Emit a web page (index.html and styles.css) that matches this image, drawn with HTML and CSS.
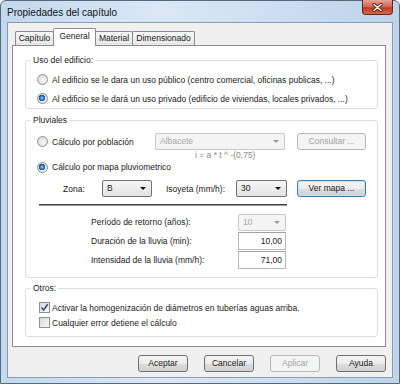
FILE: index.html
```html
<!DOCTYPE html>
<html lang="es">
<head>
  <meta charset="UTF-8" />
  <title>Propiedades del capítulo</title>
  <link rel="stylesheet" href="styles.css">
</head>
<body>
  <div class="window">
    <div class="titlebar">
      <span class="title">Propiedades del capítulo</span>
      <span class="close">
        <svg width="11" height="9" viewBox="0 0 11 9"><path d="M2 1.5 L9 7.5 M9 1.5 L2 7.5" stroke="#5a1c12" stroke-width="3.2" stroke-linecap="round"/><path d="M2 1.5 L9 7.5 M9 1.5 L2 7.5" stroke="#fff" stroke-width="1.6" stroke-linecap="round"/></svg>
      </span>
    </div>

    <div class="client">
      <div class="tabs">
        <span class="tab t-cap">Capítulo</span>
        <span class="tab active t-gen">General</span>
        <span class="tab t-mat">Material</span>
        <span class="tab t-dim">Dimensionado</span>
      </div>

      <div class="panel">
        <fieldset class="group uso">
          <legend>Uso del edificio:</legend>
          <div class="opt"><span class="radio"></span>Al edificio se le dara un uso público (centro comercial, oficinas publicas, ...)</div>
          <div class="opt"><span class="radio on"></span>Al edificio se le dará un uso privado (edificio de viviendas, locales privados, ...)</div>
        </fieldset>

        <fieldset class="group pluv">
          <legend>Pluviales</legend>
          <div class="row r-pob">
            <div class="opt w-pob"><span class="radio"></span>Cálculo por población</div>
            <span class="combo off w-alb">Albacete</span>
            <span class="btn off w-btn">Consultar ...</span>
          </div>
          <div class="formula">i = a * t ^ -(0,75)</div>
          <div class="opt r-mapa"><span class="radio on"></span>Cálculo por mapa pluviometrico</div>
          <div class="row r-zona">
            <span class="lbl w-zona">Zona:</span>
            <span class="combo w-b">B</span>
            <span class="lbl w-iso">Isoyeta (mm/h):</span>
            <span class="combo w-30">30</span>
            <span class="btn focus w-btn">Ver mapa ...</span>
          </div>
          <div class="sep"></div>
          <div class="fields">
            <div class="row field"><span class="lbl w-field">Período de retorno (años):</span><span class="combo off w-num">10</span></div>
            <div class="row field"><span class="lbl w-field">Duración de la lluvia (min):</span><span class="input w-num">10,00</span></div>
            <div class="row field"><span class="lbl w-field">Intensidad de la lluvia (mm/h):</span><span class="input w-num">71,00</span></div>
          </div>
        </fieldset>

        <fieldset class="group otros">
          <legend>Otros:</legend>
          <div class="chk-row">
            <span class="check"><svg width="9" height="9" viewBox="0 0 9 9"><path d="M1.5 4.5 L3.6 7 L7.8 1.2" fill="none" stroke="#3c4e8c" stroke-width="1.6"/></svg></span>Activar la homogenización de diámetros en tuberías aguas arriba.
          </div>
          <div class="chk-row"><span class="check"></span>Cualquier error detiene el cálculo</div>
        </fieldset>
      </div>

      <div class="buttons">
        <span class="btn">Aceptar</span>
        <span class="btn">Cancelar</span>
        <span class="btn off">Aplicar</span>
        <span class="btn">Ayuda</span>
      </div>
    </div>
  </div>
</body>
</html>
```

FILE: styles.css
```css
* {
  box-sizing: border-box;
}
body {
  margin: 0;
  font-family: "Liberation Sans", Arial, sans-serif;
  font-size: 8.5px;
  color: #1a1a1a;
}
.window {
  width: 400px;
  height: 384px;
  border: 1px solid #56687c;
  border-radius: 6px 6px 0 0;
  background: linear-gradient(to right, #c2d8ee, #dae8f6 40%, #c9dcf0 75%, #bcd3ea);
  padding: 0 6px 5px;
  display: flex;
  flex-direction: column;
}
.titlebar {
  height: 21px;
  display: flex;
  justify-content: space-between;
  align-items: flex-start;
}
.title {
  font-size: 10px;
  line-height: 12px;
  padding-top: 6px;
  color: #111;
}
.close {
  width: 31px;
  height: 15px;
  margin-top: -1px;
  border: 1px solid #6b2418;
  border-top: none;
  border-radius: 0 0 4px 4px;
  background: linear-gradient(#e7a497, #d0634f 50%, #bf3a22 55%, #d46a4a);
  display: flex;
  align-items: center;
  justify-content: center;
}
.client {
  flex: 1;
  display: flex;
  flex-direction: column;
  background: #f0f0f0;
  border: 1px solid #8a9db3;
  padding: 5px 6px 5px 4px;
}

/* tabs */
.tabs {
  display: flex;
  align-items: flex-end;
  padding-left: 3px;
}
.tab {
  height: 14px;
  line-height: 12px;
  text-align: center;
  border: 1px solid #898c95;
  border-bottom: none;
  border-radius: 2px 2px 0 0;
  background: linear-gradient(#f7f7f7, #e6e6e6);
  margin-left: -1px;
}
.tab.active {
  height: 18px;
  line-height: 15px;
  margin-bottom: -1px;
  background: #fff;
  position: relative;
  z-index: 1;
}
.t-cap { width: 39px; margin-left: 0; }
.t-gen { width: 43px; }
.t-mat { width: 38px; }
.t-dim { width: 63px; }

.panel {
  flex: 1;
  background: #fff;
  border: 1px solid #898c95;
  padding: 9px 7px 0 12px;
}

/* group boxes */
.group {
  margin: 0;
  border: 1px solid #d5dfe5;
  border-radius: 3px;
  padding: 0 0 0 11px;
}
.group legend {
  line-height: 11px;
  padding: 0 2px;
  margin-left: -6px;
}
.uso {
  padding-top: 4px;
}
.uso .opt {
  height: 19px;
}
.pluv {
  margin-top: 6px;
  padding-top: 7px;
  padding-bottom: 8px;
}
.otros {
  margin-top: 5px;
  padding-top: 6px;
  padding-bottom: 6px;
}

.opt, .chk-row {
  display: flex;
  align-items: center;
  white-space: nowrap;
}
.radio {
  width: 11px;
  height: 11px;
  border-radius: 50%;
  border: 1px solid #8f9092;
  background: radial-gradient(circle at 60% 60%, #f8f8f8, #d2d2d2);
  margin-right: 4px;
  flex: none;
}
.radio.on {
  background: radial-gradient(circle at 45% 45%, #9ed6f6 0, #2a78bf 2px, #1c4f8a 3px, transparent 3.4px),
              radial-gradient(circle at 60% 60%, #f8f8f8, #d2d2d2);
}
.chk-row {
  height: 15px;
}
.check {
  width: 11px;
  height: 11px;
  margin: 0 2px 0 2px;
  border: 1px solid #8f8f8f;
  background: linear-gradient(135deg, #d8d8d8, #f8f8f8);
  display: flex;
  align-items: center;
  justify-content: center;
  flex: none;
}

.row {
  display: flex;
  align-items: center;
}
.r-pob {
  height: 17px;
}
.w-pob { width: 118px; }
.w-alb { width: 130px; }
.w-btn { width: 69px; margin-left: 12px; }
.formula {
  line-height: 11px;
  margin-left: 158px;
  color: #8a8a8a;
}
.r-mapa {
  height: 12px;
}
.r-zona {
  height: 17px;
  margin-top: 7px;
  padding-left: 26px;
}
.w-zona { width: 39px; }
.w-b { width: 50px; }
.w-iso { width: 70px; margin-left: 14px; }
.w-30 { width: 51px; }
.r-zona .w-btn { margin-left: 10px; }
.sep {
  width: 248px;
  height: 2px;
  margin: 7px 0 0 2px;
  border-top: 1px solid #3f3f3f;
  border-bottom: 1px solid #9a9a9a;
}
.fields {
  margin-top: 7px;
  padding-left: 54px;
  display: flex;
  flex-direction: column;
  gap: 1px;
}
.field {
  height: 18px;
}
.w-field { width: 147px; }
.w-num { width: 48px; }

/* controls */
.combo {
  height: 17px;
  line-height: 15px;
  padding-left: 4px;
  border: 1px solid #707070;
  border-radius: 2px;
  background: linear-gradient(#f6f6f6, #e2e2e2);
  display: flex;
  align-items: center;
  justify-content: space-between;
}
.combo::after {
  content: "";
  margin-right: 5px;
  border-left: 3px solid transparent;
  border-right: 3px solid transparent;
  border-top: 3px solid #111;
}
.combo.off {
  border-color: #c9c9c9;
  background: #f4f4f4;
  color: #a6a6a6;
}
.combo.off::after {
  border-top-color: #9a9a9a;
}
.input {
  height: 18px;
  line-height: 16px;
  padding-right: 3px;
  text-align: right;
  border: 1px solid #b5b8c0;
  border-top-color: #9ea1a8;
  background: #fff;
}
.btn {
  height: 17px;
  line-height: 15px;
  text-align: center;
  border: 1px solid #707070;
  border-radius: 3px;
  background: linear-gradient(#f4f4f4, #ececec 50%, #dedede 50%, #d0d0d0);
}
.btn.focus {
  border-color: #3c7fb1;
  box-shadow: inset 0 0 0 1px #bfe4f9;
}
.btn.off {
  border-color: #b5b9bc;
  background: #f4f4f4;
  color: #a3a3a3;
}

.buttons {
  display: flex;
  justify-content: flex-end;
  gap: 16px;
  margin-top: 8px;
}
.buttons .btn {
  width: 50px;
}
```
